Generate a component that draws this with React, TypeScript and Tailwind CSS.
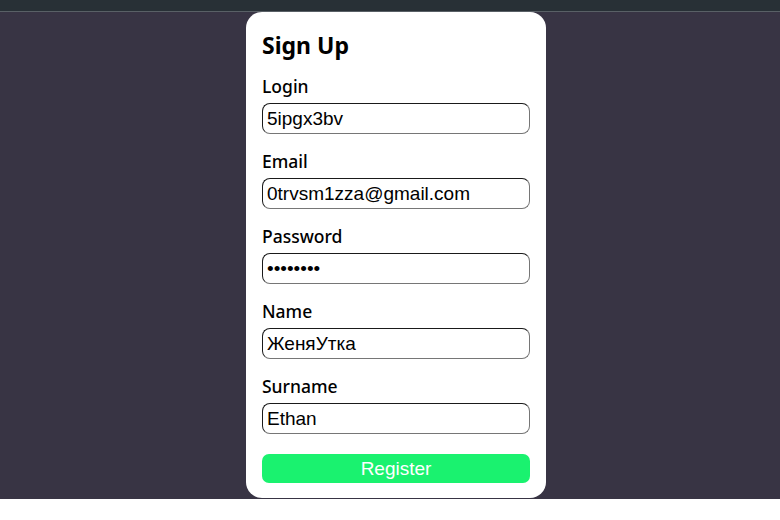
import React from 'react';

const fields = [
  { label: 'Login', type: 'text', value: '5ipgx3bv' },
  { label: 'Email', type: 'email', value: '0trvsm1zza@gmail.com' },
  { label: 'Password', type: 'password', value: 'password' },
  { label: 'Name', type: 'text', value: 'ЖеняУтка' },
  { label: 'Surname', type: 'text', value: 'Ethan' },
];

export default function App() {
  return (
    <div className="w-[780px] h-[520px] bg-white overflow-hidden">
      {/* top bar */}
      <div className="h-[12px] bg-[#283036] border-b border-[#596066]" />

      <div className="flex justify-center pl-[12px] bg-[#383444] h-[487px]">
        <form className="w-[300px] h-[486px] bg-white rounded-[16px] px-4 pt-[18px] flex flex-col">
          <h2 className="text-[23px] leading-[30px] font-bold text-black mb-[16px] font-['Noto_Sans',sans-serif]">
            Sign Up
          </h2>

          {fields.map((f) => (
            <div key={f.label} className="flex flex-col mb-[17px]">
              <label className="text-[17.5px] leading-[20px] font-medium text-black mb-[7px] font-['Noto_Sans',sans-serif]">
                {f.label}
              </label>
              <input
                type={f.type}
                defaultValue={f.value}
                className="h-[31px] w-full rounded-[8px] border border-t-[#1a1a1a] border-l-[#1a1a1a] border-r-[#767676] border-b-[#767676] px-[4px] text-[19px] text-black font-['Liberation_Sans',Arial,sans-serif] outline-none"
              />
            </div>
          ))}

          <button
            type="button"
            className="mt-[3px] h-[29px] w-full rounded-[7px] bg-[#1af26f] text-white text-[19px] leading-[29px] font-['Liberation_Sans',Arial,sans-serif]"
          >
            Register
          </button>
        </form>
      </div>
    </div>
  );
}
